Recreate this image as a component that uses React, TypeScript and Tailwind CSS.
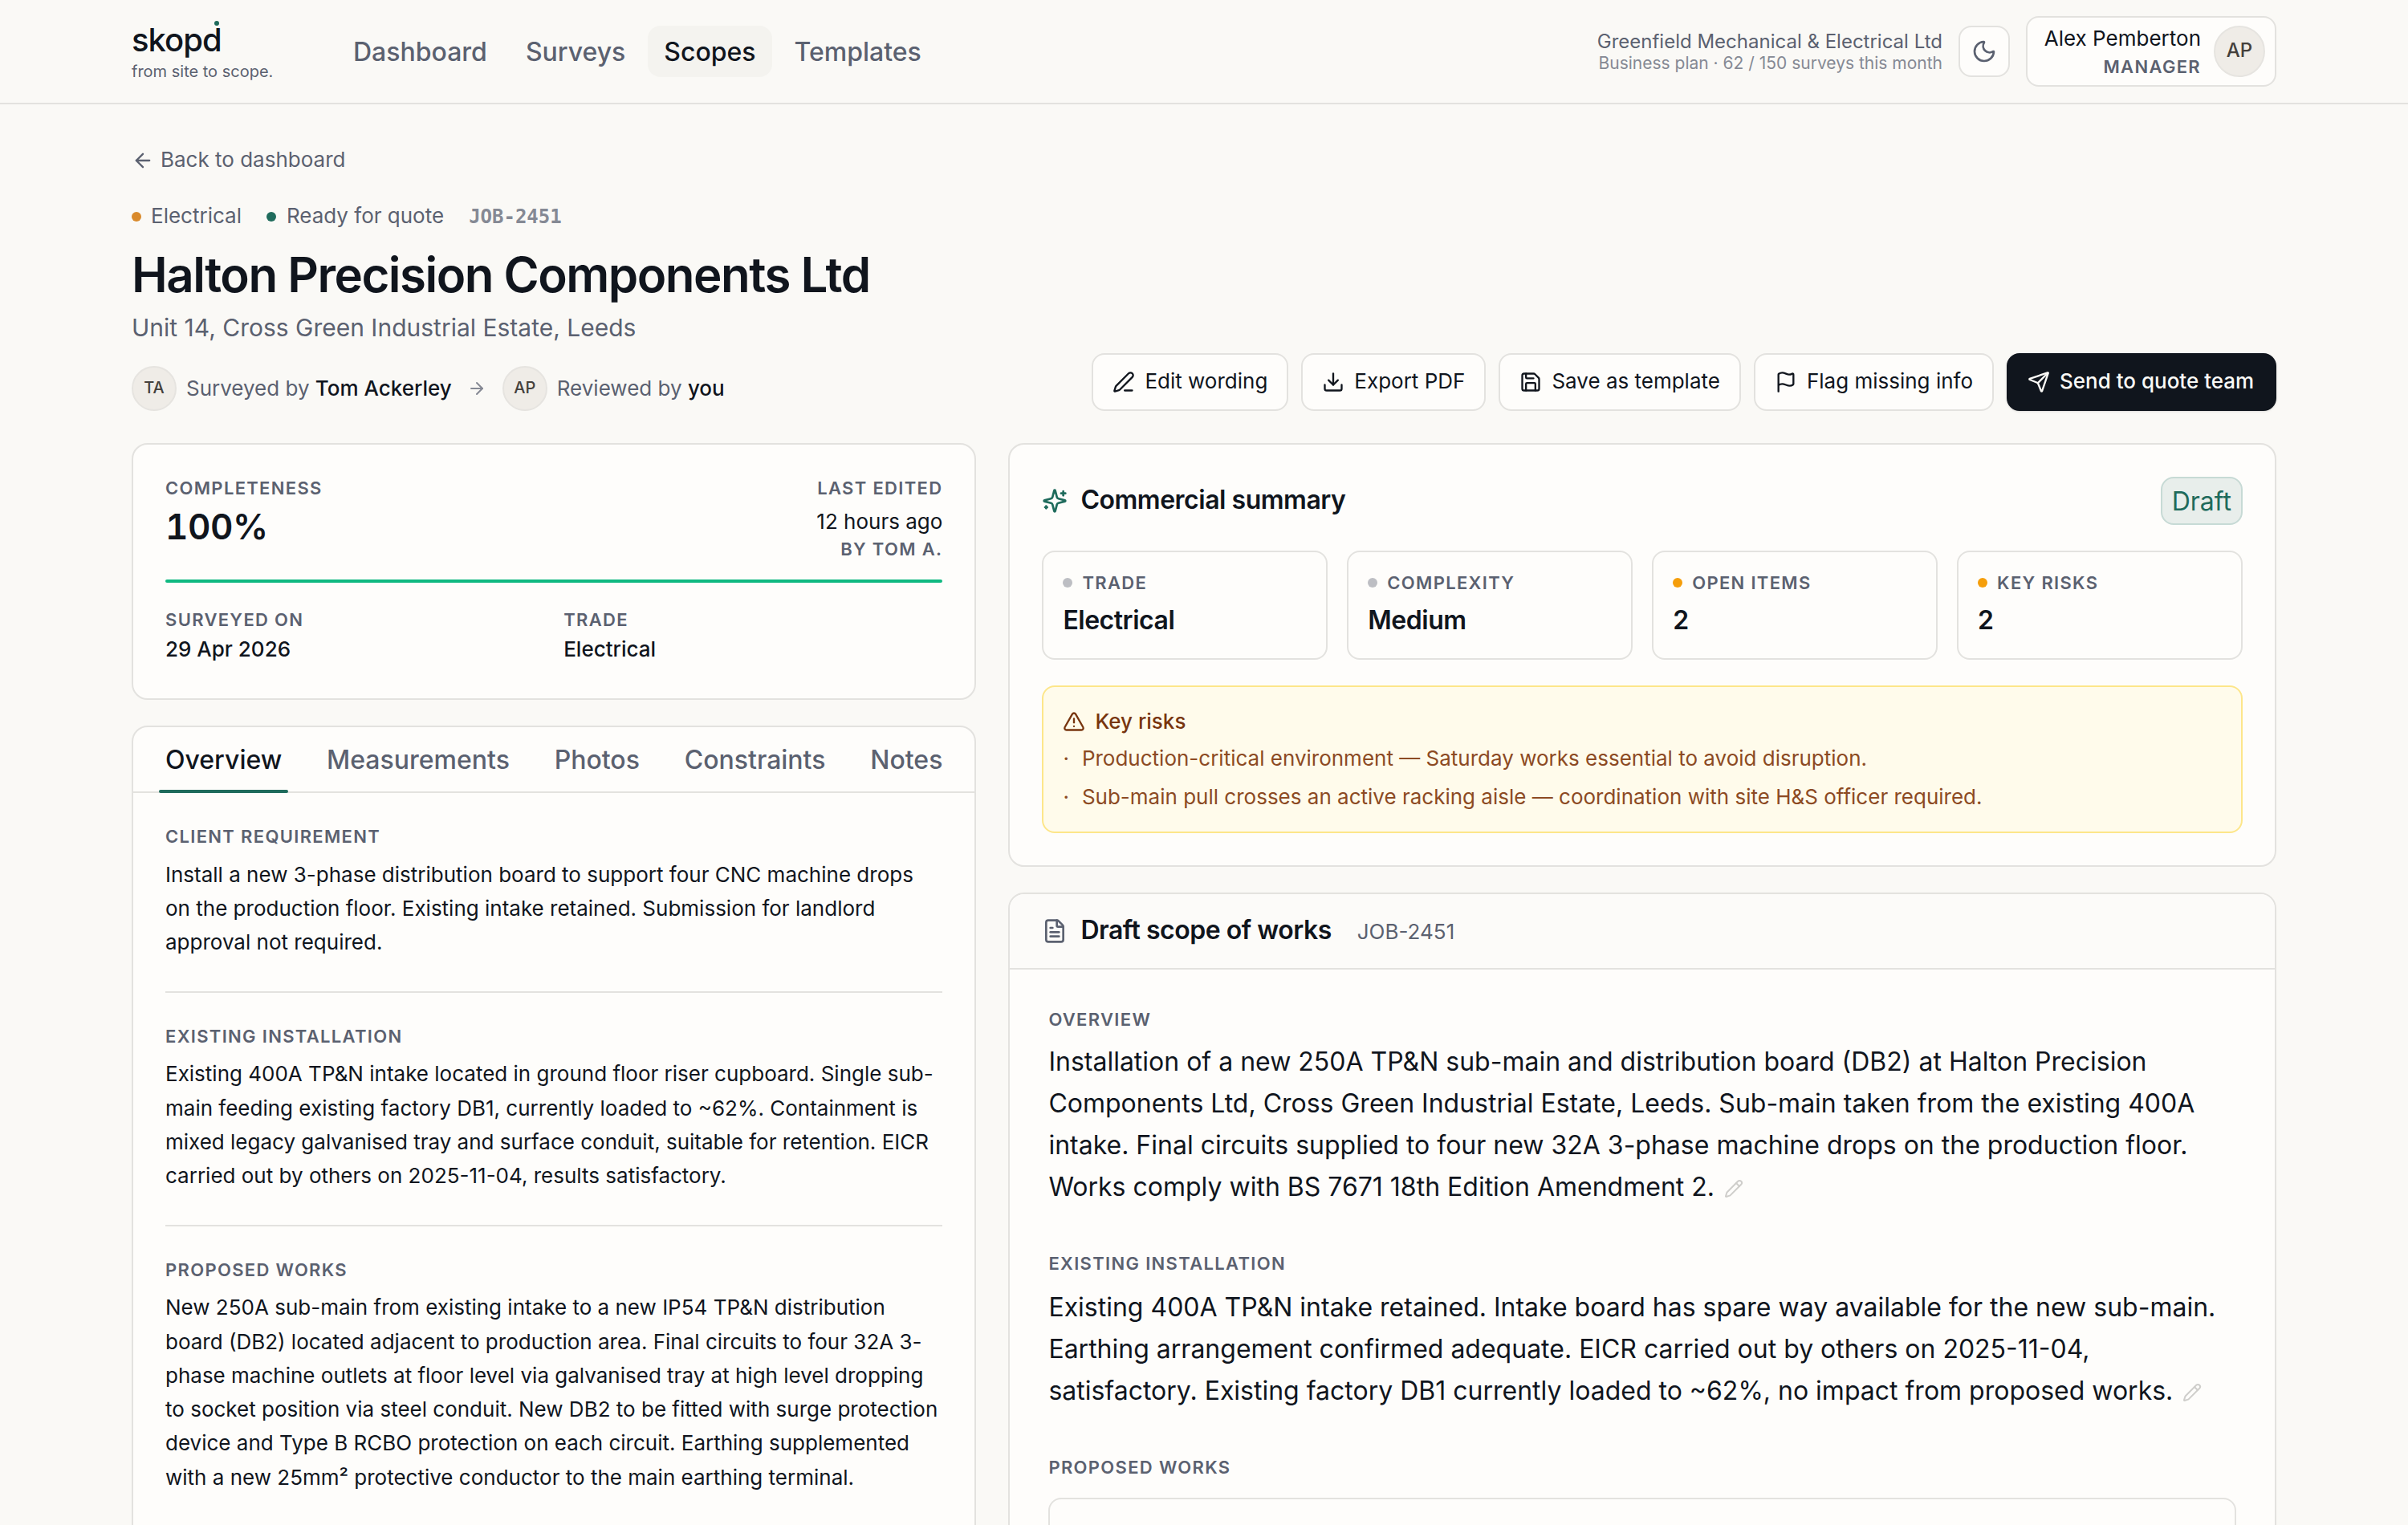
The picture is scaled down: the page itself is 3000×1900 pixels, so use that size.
import type { ReactNode } from 'react'
import {
  ArrowLeft,
  ArrowRight,
  Download,
  FileText,
  Flag,
  type LucideIcon,
  Moon,
  PenLine,
  Pencil,
  Save,
  Send,
  TriangleAlert,
} from 'lucide-react'

const NAV = ['Dashboard', 'Surveys', 'Scopes', 'Templates']
const TABS = ['Overview', 'Measurements', 'Photos', 'Constraints', 'Notes']

const ACTIONS: { label: string; icon: LucideIcon }[] = [
  { label: 'Edit wording', icon: PenLine },
  { label: 'Export PDF', icon: Download },
  { label: 'Save as template', icon: Save },
  { label: 'Flag missing info', icon: Flag },
]

const STATS = [
  { label: 'Trade', value: 'Electrical', alert: false },
  { label: 'Complexity', value: 'Medium', alert: false },
  { label: 'Open items', value: '2', alert: true },
  { label: 'Key risks', value: '2', alert: true },
]

const RISKS = [
  'Production-critical environment — Saturday works essential to avoid disruption.',
  'Sub-main pull crosses an active racking aisle — coordination with site H&S officer required.',
]

const SURVEY = [
  {
    title: 'Client requirement',
    body: 'Install a new 3-phase distribution board to support four CNC machine drops on the production floor. Existing intake retained. Submission for landlord approval not required.',
  },
  {
    title: 'Existing installation',
    body: 'Existing 400A TP&N intake located in ground floor riser cupboard. Single sub-main feeding existing factory DB1, currently loaded to ~62%. Containment is mixed legacy galvanised tray and surface conduit, suitable for retention. EICR carried out by others on 2025-11-04, results satisfactory.',
  },
  {
    title: 'Proposed works',
    body: 'New 250A sub-main from existing intake to a new IP54 TP&N distribution board (DB2) located adjacent to production area. Final circuits to four 32A 3-phase machine outlets at floor level via galvanised tray at high level dropping to socket position via steel conduit. New DB2 to be fitted with surge protection device and Type B RCBO protection on each circuit. Earthing supplemented with a new 25mm² protective conductor to the main earthing terminal.',
  },
]

const SCOPE = [
  {
    title: 'Overview',
    body: 'Installation of a new 250A TP&N sub-main and distribution board (DB2) at Halton Precision Components Ltd, Cross Green Industrial Estate, Leeds. Sub-main taken from the existing 400A intake. Final circuits supplied to four new 32A 3-phase machine drops on the production floor. Works comply with BS 7671 18th Edition Amendment 2.',
  },
  {
    title: 'Existing installation',
    body: 'Existing 400A TP&N intake retained. Intake board has spare way available for the new sub-main. Earthing arrangement confirmed adequate. EICR carried out by others on 2025-11-04, satisfactory. Existing factory DB1 currently loaded to ~62%, no impact from proposed works.',
  },
]

function Label({ children }: { children: ReactNode }) {
  return (
    <div className="text-[22px] leading-[28px] font-semibold uppercase tracking-[0.06em] text-[#5b6170]">
      {children}
    </div>
  )
}

function Card({ children, className = '' }: { children: ReactNode; className?: string }) {
  return (
    <section className={`rounded-[20px] border-2 border-[#e3e2df] bg-[#fefdfb] ${className}`}>
      {children}
    </section>
  )
}

function Sparkles() {
  return (
    <svg
      viewBox="0 0 24 24"
      className="size-8 text-[#1f6b5c]"
      fill="none"
      stroke="currentColor"
      strokeWidth={2}
      strokeLinecap="round"
      strokeLinejoin="round"
    >
      <path d="M9.937 15.5A2 2 0 0 0 8.5 14.063l-6.135-1.582a.5.5 0 0 1 0-.962L8.5 9.936A2 2 0 0 0 9.937 8.5l1.582-6.135a.5.5 0 0 1 .963 0L14.063 8.5A2 2 0 0 0 15.5 9.937l6.135 1.581a.5.5 0 0 1 0 .964L15.5 14.063a2 2 0 0 0-1.437 1.437l-1.582 6.135a.5.5 0 0 1-.963 0z" />
      <path d="M20 3v4" />
      <path d="M22 5h-4" />
      <path d="M4 17v2" />
      <path d="M5 18H3" />
    </svg>
  )
}

function Logo() {
  return (
    <div className="flex w-[216px] flex-col">
      <span className="relative mt-0.5 self-start text-[40px] leading-[48px] font-medium tracking-[-0.025em]">
        skopd
        <span className="absolute top-0 right-[3px] size-1.5 rounded-full bg-[#1f6b5c]" />
      </span>
      <span className="mt-px mb-px text-[20px] leading-[28px] text-[#5b6170]">from site to scope.</span>
    </div>
  )
}

function Header() {
  return (
    <header className="h-[130px] border-b-2 border-[#e3e2df]">
      <div className="mx-auto flex h-[128px] max-w-[2800px] items-center px-16">
        <Logo />
        <nav className="ml-10 flex gap-2">
          {NAV.map(item => (
            <a
              key={item}
              className={`flex h-16 items-center rounded-2xl px-5 pt-0.5 text-[32px] font-medium ${
                item === 'Scopes' ? 'bg-[#f4f3ef] text-[#10151d]' : 'text-[#5b6170]'
              }`}
            >
              {item}
            </a>
          ))}
        </nav>
        <div className="ml-auto flex items-center gap-5">
          <div className="pt-0.5 text-right">
            <div className="text-[24px] leading-[28px] text-[#5b6170]">Greenfield Mechanical &amp; Electrical Ltd</div>
            <div className="text-[21px] leading-[26px] text-[#858994]">Business plan · 62 / 150 surveys this month</div>
          </div>
          <button className="flex size-16 items-center justify-center rounded-2xl border-2 border-[#e3e2df] bg-[#fefdfb] text-[#5b6170]">
            <Moon size={32} />
          </button>
          <div className="flex h-[88px] w-[312px] items-center justify-end gap-4 rounded-2xl border-2 border-[#e3e2df] bg-[#fefdfb] pr-3">
            <div className="text-right">
              <div className="text-[26px] leading-[38px]">Alex Pemberton</div>
              <div className="text-[22px] leading-[32px] font-semibold tracking-[0.06em] text-[#5b6170]">MANAGER</div>
            </div>
            <span className="flex size-16 items-center justify-center rounded-full border-2 border-[#e6e4e0] bg-[#efece7] pb-[3px] text-[24px] font-medium text-[#44403c]">
              AP
            </span>
          </div>
        </div>
      </div>
    </header>
  )
}

function Avatar({ initials }: { initials: string }) {
  return (
    <span className="flex size-14 items-center justify-center rounded-full border-2 border-[#e6e4e0] bg-[#efece7] pb-0.5 text-[20px] font-medium text-[#44403c]">
      {initials}
    </span>
  )
}

function JobHeader() {
  return (
    <div className="flex items-end justify-between">
      <div>
        <div className="flex h-[36px] items-center text-[26px] leading-[34px] text-[#5b6170]">
          <span className="mr-3 size-3 rounded-full bg-[#d98a2b]" />
          <span className="pb-0.5">Electrical</span>
          <span className="mr-[13px] ml-[31px] size-3 rounded-full bg-[#1f6b5c]" />
          <span className="pb-0.5">Ready for quote</span>
          <span className="ml-[31px] font-['DejaVu_Sans_Mono',monospace] text-[24px] font-bold text-[#858994]">JOB-2451</span>
        </div>
        <h1 className="mt-4 text-[60px] leading-[76px] font-semibold tracking-[-0.025em]">
          Halton Precision Components Ltd
        </h1>
        <p className="mt-1.5 text-[30px] leading-[44px] text-[#5b6170]">Unit 14, Cross Green Industrial Estate, Leeds</p>
        <div className="mt-[26px] flex items-center text-[26px] text-[#5b6170]">
          <Avatar initials="TA" />
          <span className="ml-3 pb-0.5">
            Surveyed by <span className="font-medium text-[#10151d]">Tom Ackerley</span>
          </span>
          <ArrowRight size={24} className="mr-5 ml-[19px] text-[#858994]" />
          <Avatar initials="AP" />
          <span className="ml-3 pb-0.5">
            Reviewed by <span className="font-medium text-[#10151d]">you</span>
          </span>
        </div>
      </div>
      <div className="flex gap-4 text-[26px]">
        {ACTIONS.map(({ label, icon: Icon }) => (
          <button key={label} className="flex h-[72px] items-center gap-3 rounded-2xl border-2 border-[#e3e2df] bg-[#fefdfb] px-6">
            <Icon size={28} />
            <span className="pb-[3px]">{label}</span>
          </button>
        ))}
        <button className="flex h-[72px] w-[336px] items-center gap-3 rounded-2xl border-2 border-[#10151d] bg-[#10151d] px-6 font-medium text-[#faf9f6] shadow-sm">
          <Send size={28} />
          <span className="pb-[3px]">Send to quote team</span>
        </button>
      </div>
    </div>
  )
}

function Completeness() {
  return (
    <Card className="h-[320px] p-10">
      <div className="flex justify-between">
        <div>
          <Label>Completeness</Label>
          <div className="mt-1.5 text-[44px] leading-[56px] font-semibold tracking-[-0.01em] tabular-nums">100%</div>
        </div>
        <div className="text-right">
          <Label>Last edited</Label>
          <div className="mt-2 text-[26px] leading-[40px]">12 hours ago</div>
          <Label>by Tom A.</Label>
        </div>
      </div>
      <div className="mt-6 h-1 rounded-full bg-[#10b981]" />
      <div className="mt-8 grid grid-cols-2 gap-6">
        <div>
          <Label>Surveyed on</Label>
          <div className="mt-[3px] text-[26px] leading-[40px] font-medium">29 Apr 2026</div>
        </div>
        <div>
          <Label>Trade</Label>
          <div className="mt-[3px] text-[26px] leading-[40px] font-medium">Electrical</div>
        </div>
      </div>
    </Card>
  )
}

function SurveyPanel() {
  return (
    <Card className="h-[1100px]">
      <div className="flex h-[82px] items-stretch justify-between border-b-2 border-[#e3e2df] px-8 text-[32px] font-medium text-[#5b6170]">
        {TABS.map(tab => (
          <button
            key={tab}
            className={
              tab === 'Overview'
                ? 'relative px-2 pt-0.5 text-[#10151d] after:absolute after:inset-x-0 after:-bottom-0.5 after:h-1 after:rounded-full after:bg-[#1f6b5c]'
                : 'px-2 pt-0.5'
            }
          >
            {tab}
          </button>
        ))}
      </div>
      <div className="divide-y-2 divide-[#e3e2df] px-10">
        {SURVEY.map(({ title, body }) => (
          <div key={title} className="pt-10 pb-[39.5px]">
            <Label>{title}</Label>
            <p className="mt-[12.5px] text-[26px] leading-[1.625]">{body}</p>
          </div>
        ))}
      </div>
    </Card>
  )
}

function CommercialSummary() {
  return (
    <Card className="p-10">
      <div className="flex items-center gap-4">
        <Sparkles />
        <h2 className="pb-0.5 text-[32px] leading-[46px] font-semibold tracking-[-0.015em]">Commercial summary</h2>
        <span className="ml-auto flex h-[60px] items-center rounded-2xl border-2 border-[#c7dad5] bg-[#e8eeeb] px-3 pt-0.5 text-[32px] text-[#1f6b5c]">
          Draft
        </span>
      </div>
      <div className="mt-8 grid grid-cols-4 gap-6">
        {STATS.map(({ label, value, alert }) => (
          <div key={label} className="h-[136px] rounded-2xl border-2 border-[#e3e2df] px-6 pt-6">
            <div className="flex items-center gap-3">
              <span className={`size-3 rounded-full ${alert ? 'bg-[#f59e0b]' : 'bg-[#bdbec3]'}`} />
              <Label>{label}</Label>
            </div>
            <div className="mt-[11px] text-[32px] leading-[44px] font-semibold tracking-[-0.015em]">{value}</div>
          </div>
        ))}
      </div>
      <div className="mt-8 rounded-2xl border-2 border-[#fde68a] bg-[#fffbeb] px-6 pt-[25px] pb-[23px] text-[26px]">
        <div className="flex items-center gap-3 leading-[36px] font-medium text-[#78350f]">
          <TriangleAlert size={28} />
          Key risks
        </div>
        <ul className="mt-2 space-y-2 leading-[40px] text-[#8c4a23]">
          {RISKS.map(risk => (
            <li key={risk} className="flex gap-4">
              <span>·</span>
              {risk}
            </li>
          ))}
        </ul>
      </div>
    </Card>
  )
}

function DraftScope() {
  return (
    <Card className="h-[900px] overflow-hidden">
      <div className="flex h-[94px] items-center border-b-2 border-[#e3e2df] bg-[#fcfbf9] px-10">
        <FileText size={32} className="text-[#5b6170]" />
        <h2 className="ml-4 pb-0.5 text-[32px] leading-[46px] font-semibold tracking-[-0.015em]">Draft scope of works</h2>
        <span className="ml-8 text-[26px] text-[#5b6170]">JOB-2451</span>
      </div>
      <div className="space-y-[55px] p-12">
        {SCOPE.map(({ title, body }, i) => (
          <div key={title}>
            <Label>{title}</Label>
            <p className={`text-[32px] leading-[52px] ${i === 0 ? 'mt-[13px]' : 'mt-[15px]'}`}>
              {body}
              <Pencil size={24} className="ml-3 inline text-[#cfcecb]" />
            </p>
          </div>
        ))}
        <div>
          <Label>Proposed works</Label>
          <div className="mt-6 h-[200px] rounded-2xl border-2 border-[#e3e2df]" />
        </div>
      </div>
    </Card>
  )
}

export default function App() {
  return (
    <div className="h-[1900px] overflow-hidden bg-[#faf9f6] font-['Inter',sans-serif] text-[#10151d]">
      <Header />
      <main className="mx-auto max-w-[2800px] px-16 pt-[50px]">
        <a className="flex items-center gap-2 text-[26px] leading-[40px] text-[#5b6170]">
          <ArrowLeft size={28} />
          <span className="pb-0.5 leading-[38px]">Back to dashboard</span>
        </a>
        <div className="mt-8">
          <JobHeader />
        </div>
        <div className="mt-10 grid grid-cols-[1052.4px_1fr] gap-10">
          <div className="flex flex-col gap-8">
            <Completeness />
            <SurveyPanel />
          </div>
          <div className="flex flex-col gap-8">
            <CommercialSummary />
            <DraftScope />
          </div>
        </div>
      </main>
    </div>
  )
}
